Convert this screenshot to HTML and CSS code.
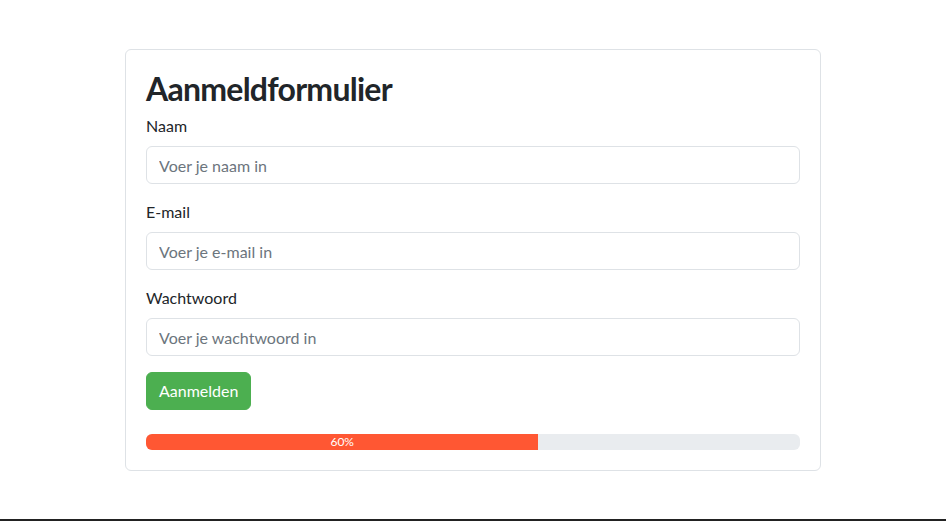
FILE: index.html
```html
<!DOCTYPE html>
<html lang="nl">
<head>
<meta charset="utf-8">
<title>Aanmeldformulier</title>
<link rel="stylesheet" href="styles.css">
</head>
<body>
<div class="container">
  <div class="card">
    <h2 class="title">Aanmeldformulier</h2>
    <form class="form">
      <div class="group">
        <label class="label" for="naam">Naam</label>
        <input class="input" id="naam" type="text" placeholder="Voer je naam in">
      </div>
      <div class="group">
        <label class="label" for="email">E-mail</label>
        <input class="input" id="email" type="email" placeholder="Voer je e-mail in">
      </div>
      <div class="group">
        <label class="label" for="ww">Wachtwoord</label>
        <input class="input" id="ww" type="password" placeholder="Voer je wachtwoord in">
      </div>
      <button class="btn" type="button">Aanmelden</button>
    </form>
    <div class="progress">
      <div class="progress-bar" style="width: 60%">60%</div>
    </div>
  </div>
</div>
</body>
</html>
```
FILE: styles.css
```css
* { box-sizing: border-box; }
html, body { margin: 0; }
body {
  min-height: 100vh;
  background: #fff;
  color: #212529;
  font-family: "Lato", "Noto Sans", "Liberation Sans", sans-serif;
  font-size: 16px;
  line-height: 1.5;
  border-bottom: 2px solid #222;
  padding-top: 49px;
}
.container {
  width: 720px;
  margin: 0 auto;
  padding: 0 12px;
}
.card {
  border: 1px solid #dee2e6;
  border-radius: 6px;
  padding: 20px;
}
.title {
  margin: 0 0 6px;
  font-size: 32px;
  font-weight: 700;
  letter-spacing: -0.75px;
  line-height: 1.2;
}
.form { margin: 0; }
.group { margin-bottom: 16px; }
.label {
  display: block;
  margin-bottom: 8px;
}
.input {
  display: block;
  width: 100%;
  height: 38px;
  padding: 6px 12px;
  font: inherit;
  color: #212529;
  border: 1px solid #dee2e6;
  border-radius: 6px;
  background: #fff;
}
.input::placeholder { color: #6c757d; opacity: 1; }
.btn {
  display: inline-block;
  height: 38px;
  padding: 6px 12px;
  font: inherit;
  color: #fff;
  background: #4caf50;
  border: 1px solid #4caf50;
  border-radius: 6px;
}
.progress {
  display: flex;
  margin-top: 24px;
  height: 16px;
  background: #e9ecef;
  border-radius: 6px;
  overflow: hidden;
}
.progress-bar {
  display: flex;
  align-items: center;
  justify-content: center;
  background: #ff5733;
  color: #fff;
  font-size: 12px;
  line-height: 1;
}
```
